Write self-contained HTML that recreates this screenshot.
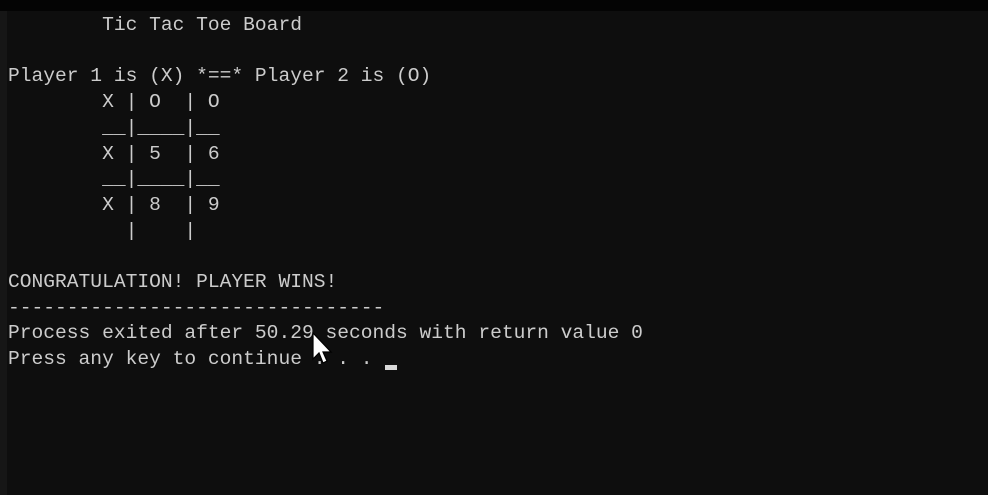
<!DOCTYPE html>
<html><head><style>
html,body{margin:0;padding:0;}
body{width:988px;height:495px;background:#0e0e0e;position:relative;overflow:hidden;}
.top{position:absolute;left:0;top:0;width:988px;height:11px;background:#040404;}
.left{position:absolute;left:0;top:11px;width:7px;height:484px;background:#161616;}
pre{position:absolute;left:8px;top:13px;margin:0;font-family:"Liberation Mono",monospace;font-size:19.6px;line-height:25.7px;color:#cccccc;}
.cur{position:absolute;left:385px;top:365px;width:12px;height:5px;background:#d8d8d8;}
svg{position:absolute;left:312px;top:332px;}
</style></head><body>
<div class="top"></div><div class="left"></div>
<pre>        Tic Tac Toe Board

Player 1 is (X) *==* Player 2 is (O)
        X | O  | O
        __|____|__
        X | 5  | 6
        __|____|__
        X | 8  | 9
          |    |

CONGRATULATION! PLAYER WINS!
--------------------------------
Process exited after 50.29 seconds with return value 0
Press any key to continue . . .</pre>
<div class="cur"></div>
<svg width="22" height="34" viewBox="0 0 22 34"><path d="M1 1 L1 27 L7 21 L11 31 L15 29 L11 20 L19 20 Z" fill="#ffffff" stroke="#000" stroke-width="1.2"/></svg>
</body></html>
